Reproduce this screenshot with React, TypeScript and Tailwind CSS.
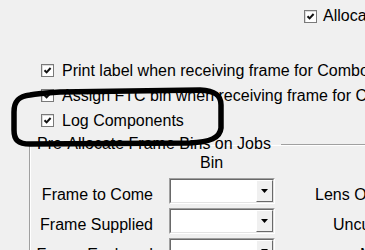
import React from 'react';

const CheckBox = () => (
  <span className="w-[13px] h-[13px] shrink-0 border border-[#7a7a7a] bg-white flex items-center justify-center shadow-[inset_1px_1px_0_#dcdcdc]">
    <svg width="9" height="9" viewBox="0 0 9 9">
      <path d="M1.5 4.2 L3.6 6.4 L7.6 2" stroke="#111" strokeWidth="2" fill="none" />
    </svg>
  </span>
);

const CheckRow = ({ label }: { label: string }) => (
  <div className="h-[25px] flex items-center gap-[8px] whitespace-nowrap">
    <CheckBox />
    <span>{label}</span>
  </div>
);

const Combo = () => (
  <div className="w-[106px] h-[26px] border border-t-[#a0a0a0] border-l-[#a0a0a0] border-r-white border-b-white">
    <div className="h-full bg-white flex justify-end border border-t-[#696969] border-l-[#696969] border-r-[#e3e3e3] border-b-[#e3e3e3]">
      <div className="w-[17px] h-full bg-[#f0f0f0] flex items-center justify-center border border-t-white border-l-white border-r-[#696969] border-b-[#696969]">
        <svg width="7" height="4" viewBox="0 0 7 4">
          <path d="M0 0 H7 L3.5 4 Z" fill="#000" />
        </svg>
      </div>
    </div>
  </div>
);

const rows = [
  { left: 'Frame to Come', right: 'Lens Only', pad: 'pl-[40px]' },
  { left: 'Frame Supplied', right: 'Uncut', pad: 'pl-[58px]' },
  { left: 'Frame Enclosed', right: 'Metal', pad: 'pl-[85px]' },
];

export default function App() {
  return (
    <div className="relative w-[365px] h-[250px] overflow-hidden bg-[#f0f0f0] text-black text-[16px] font-['Liberation_Sans',Arial,sans-serif]">
      {/* top-right option, cut off by the window edge */}
      <div className="h-[32px] pl-[304px] flex items-center gap-[6px] whitespace-nowrap">
        <CheckBox />
        <span>Allocate Frame Bins</span>
      </div>

      <div className="mt-[26px] pl-[41px]">
        <CheckRow label="Print label when receiving frame for Combobox" />
        <CheckRow label="Assign FTC bin when receiving frame for Combobox" />
        <CheckRow label="Log Components" />
      </div>

      <fieldset className="mt-[3px] ml-[29px] w-[420px] border border-[#a0a0a0] shadow-[inset_1px_1px_0_#fff]">
        <legend className="ml-[5px] pl-[2px] pr-[10px] leading-[16px]">Pre-Allocate Frame Bins on Jobs</legend>

        <div className="mt-[5px] leading-[12px] pl-[170px]">Bin</div>

        <div className="mt-[9px] flex flex-col gap-[4px]">
          {rows.map((r) => (
            <div key={r.left} className="h-[26px] flex items-center whitespace-nowrap">
              <div className="w-[123px] pt-[8px] text-right">{r.left}</div>
              <div className="ml-[16px]">
                <Combo />
              </div>
              <div className={`pt-[8px] ${r.pad}`}>{r.right}</div>
            </div>
          ))}
        </div>
      </fieldset>

      {/* hand-drawn marker annotation */}
      <svg className="absolute inset-0 pointer-events-none" width="365" height="250" viewBox="0 0 365 250">
        <path
          d="M30 95 C20 96 14 100 14 112 L14 130 C14 140 18 144 30 144 L190 143 C210 142 220 138 221 128 L221 105 C221 95 215 91 200 90 L60 92 C45 93 35 94 30 95 Z"
          stroke="#000"
          strokeWidth="5.5"
          fill="none"
          strokeLinejoin="round"
        />
      </svg>
    </div>
  );
}
